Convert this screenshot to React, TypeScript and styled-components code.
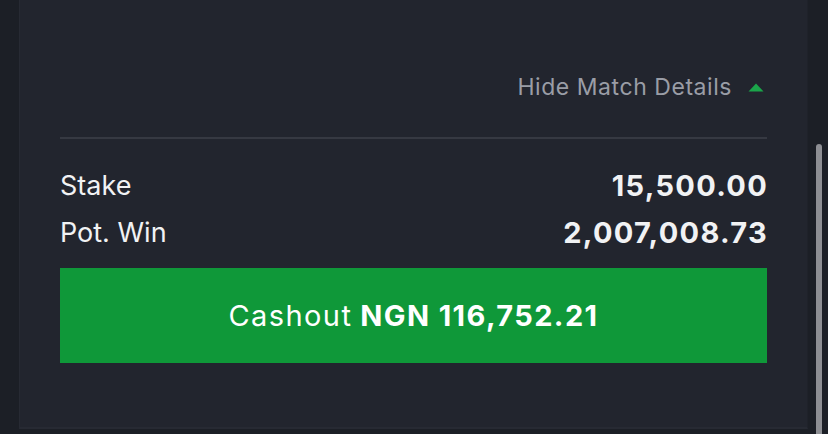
import React from 'react';
import styled, { createGlobalStyle } from 'styled-components';

const GlobalStyle = createGlobalStyle`
  html, body {
    margin: 0;
    padding: 0;
    height: 434px;
    overflow: hidden;
    background-color: #1c1f26;
    font-family: Inter, "Noto Sans", "Liberation Sans", sans-serif;
  }
`;

const Page = styled.div`
  display: flex;
  height: 434px;
  padding-left: 19px;
  box-sizing: border-box;
`;

const Panel = styled.div`
  width: 789px;
  height: 429px;
  box-sizing: border-box;
  background-color: #22252e;
  border-left: 1px solid #272a33;
  border-right: 1px solid #1f222a;
  border-bottom: 2px solid #272a33;
  padding: 72px 40px 0 40px;
  display: flex;
  flex-direction: column;
`;

const DetailsToggle = styled.div`
  display: flex;
  justify-content: flex-end;
  align-items: center;
  gap: 16px;
  height: 30px;
  padding-right: 3px;
  font-size: 23px;
  line-height: 30px;
  color: #9a9da6;
  letter-spacing: 0.55px;
`;

const Caret = styled.svg`
  width: 16px;
  height: 9px;
  display: block;
`;

const Divider = styled.div`
  height: 2px;
  margin-top: 35px;
  background-color: #363942;
`;

const Summary = styled.div`
  margin-top: 23px;
  display: flex;
  flex-direction: column;
`;

const SummaryRow = styled.div`
  display: flex;
  justify-content: space-between;
  align-items: center;
  height: 47px;
  font-size: 27px;
  line-height: 47px;
  color: #f1f2f4;
`;

const Label = styled.span`
  font-weight: 400;
`;

const Amount = styled.span`
  font-size: 29px;
  font-weight: 700;
  letter-spacing: 1.3px;
  margin-right: -1px;
`;

const CashoutButton = styled.button`
  margin-top: 12px;
  height: 95px;
  width: 100%;
  border: none;
  border-radius: 0;
  background-color: #0f9839;
  color: #ffffff;
  font-family: inherit;
  font-size: 29px;
  font-weight: 400;
  letter-spacing: 1.4px;
  display: flex;
  align-items: center;
  justify-content: center;
  gap: 8px;
  cursor: pointer;

  strong {
    font-weight: 700;
  }
`;

const ScrollTrack = styled.div`
  width: 6px;
  margin-left: 8px;
  padding-top: 144px;
  display: flex;
`;

const ScrollThumb = styled.div`
  width: 6px;
  flex: 1;
  border-radius: 3px 3px 0 0;
  background-color: #8d8e93;
`;

const App: React.FC = () => {
  return (
    <>
      <GlobalStyle />
      <Page>
        <Panel>
          <DetailsToggle>
            Hide Match Details
            <Caret viewBox="0 0 16 9">
              <path d="M8 0.5 L15.5 8.5 L0.5 8.5 Z" fill="#1ba54a" />
            </Caret>
          </DetailsToggle>
          <Divider />
          <Summary>
            <SummaryRow>
              <Label>Stake</Label>
              <Amount>15,500.00</Amount>
            </SummaryRow>
            <SummaryRow>
              <Label>Pot. Win</Label>
              <Amount>2,007,008.73</Amount>
            </SummaryRow>
          </Summary>
          <CashoutButton>
            Cashout <strong>NGN 116,752.21</strong>
          </CashoutButton>
        </Panel>
        <ScrollTrack>
          <ScrollThumb />
        </ScrollTrack>
      </Page>
    </>
  );
};

export default App;
